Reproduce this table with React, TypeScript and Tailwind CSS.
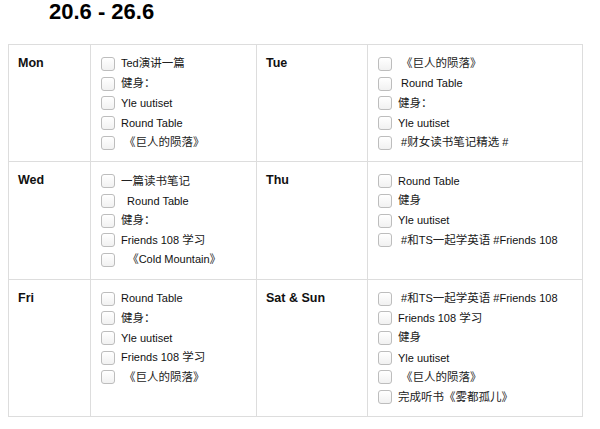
import React from "react";

type Day = { label: string; items: string[] };

const rows: Day[][] = [
  [
    {
      label: "Mon",
      items: ["Ted演讲一篇", "健身：", "Yle uutiset", "Round Table", " 《巨人的陨落》"],
    },
    {
      label: "Tue",
      items: [" 《巨人的陨落》", " Round Table", "健身：", "Yle uutiset", " #财女读书笔记精选 #"],
    },
  ],
  [
    {
      label: "Wed",
      items: ["一篇读书笔记", "  Round Table", "健身：", "Friends 108 学习", "  《Cold Mountain》"],
    },
    {
      label: "Thu",
      items: ["Round Table", "健身", "Yle uutiset", " #和TS一起学英语 #Friends 108"],
    },
  ],
  [
    {
      label: "Fri",
      items: ["Round Table", "健身：", "Yle uutiset", "Friends 108 学习", " 《巨人的陨落》"],
    },
    {
      label: "Sat & Sun",
      items: [
        " #和TS一起学英语 #Friends 108",
        "Friends 108 学习",
        "健身",
        "Yle uutiset",
        " 《巨人的陨落》",
        "完成听书《雾都孤儿》",
      ],
    },
  ],
];

const cjk = /([\u3000-\u303f\u4e00-\u9fff\uff00-\uffef]+)/;

function Text({ s }: { s: string }) {
  const parts = s.split(cjk).filter((p) => p.length > 0);
  return (
    <span className="whitespace-pre">
      {parts.map((p, i) =>
        cjk.test(p) ? (
          <span key={i} className="text-[11.5px] text-[#222]">
            {p}
          </span>
        ) : (
          <span key={i}>{p}</span>
        )
      )}
    </span>
  );
}

function Item({ s }: { s: string }) {
  return (
    <div className="flex h-[19.7px] items-center gap-[6px]">
      <div className="h-[14px] w-[14px] shrink-0 rounded-[3px] border border-[#bdbdbd] bg-gradient-to-b from-white to-[#f1f1f1]" />
      <Text s={s} />
    </div>
  );
}

export default function App() {
  return (
    <div
      className="h-[429px] w-[600px] bg-white text-[#111]"
      style={{ fontFamily: '"Liberation Sans", Arial, "Noto Sans CJK SC", sans-serif' }}
    >
      <div className="pl-[49px] pt-[1px] text-[22px] font-bold leading-[21px] text-black">
        20.6 - 26.6
      </div>
      <div className="ml-[8px] mt-[22px] grid w-[575px] grid-cols-[82px_166px_111px_215px] border-l border-t border-[#dddddd]">
        {rows.map((row, ri) =>
          row.map((d) => (
            <React.Fragment key={ri + d.label}>
              <div className="border-b border-r border-[#dddddd] pl-[9px] pt-[9px] text-[12.5px] font-bold leading-[19.7px]">
                {d.label}
              </div>
              <div className="border-b border-r border-[#dddddd] pb-[9px] pl-[10px] pt-[9px] text-[11px]">
                {d.items.map((s, i) => (
                  <Item key={i} s={s} />
                ))}
              </div>
            </React.Fragment>
          ))
        )}
      </div>
    </div>
  );
}
